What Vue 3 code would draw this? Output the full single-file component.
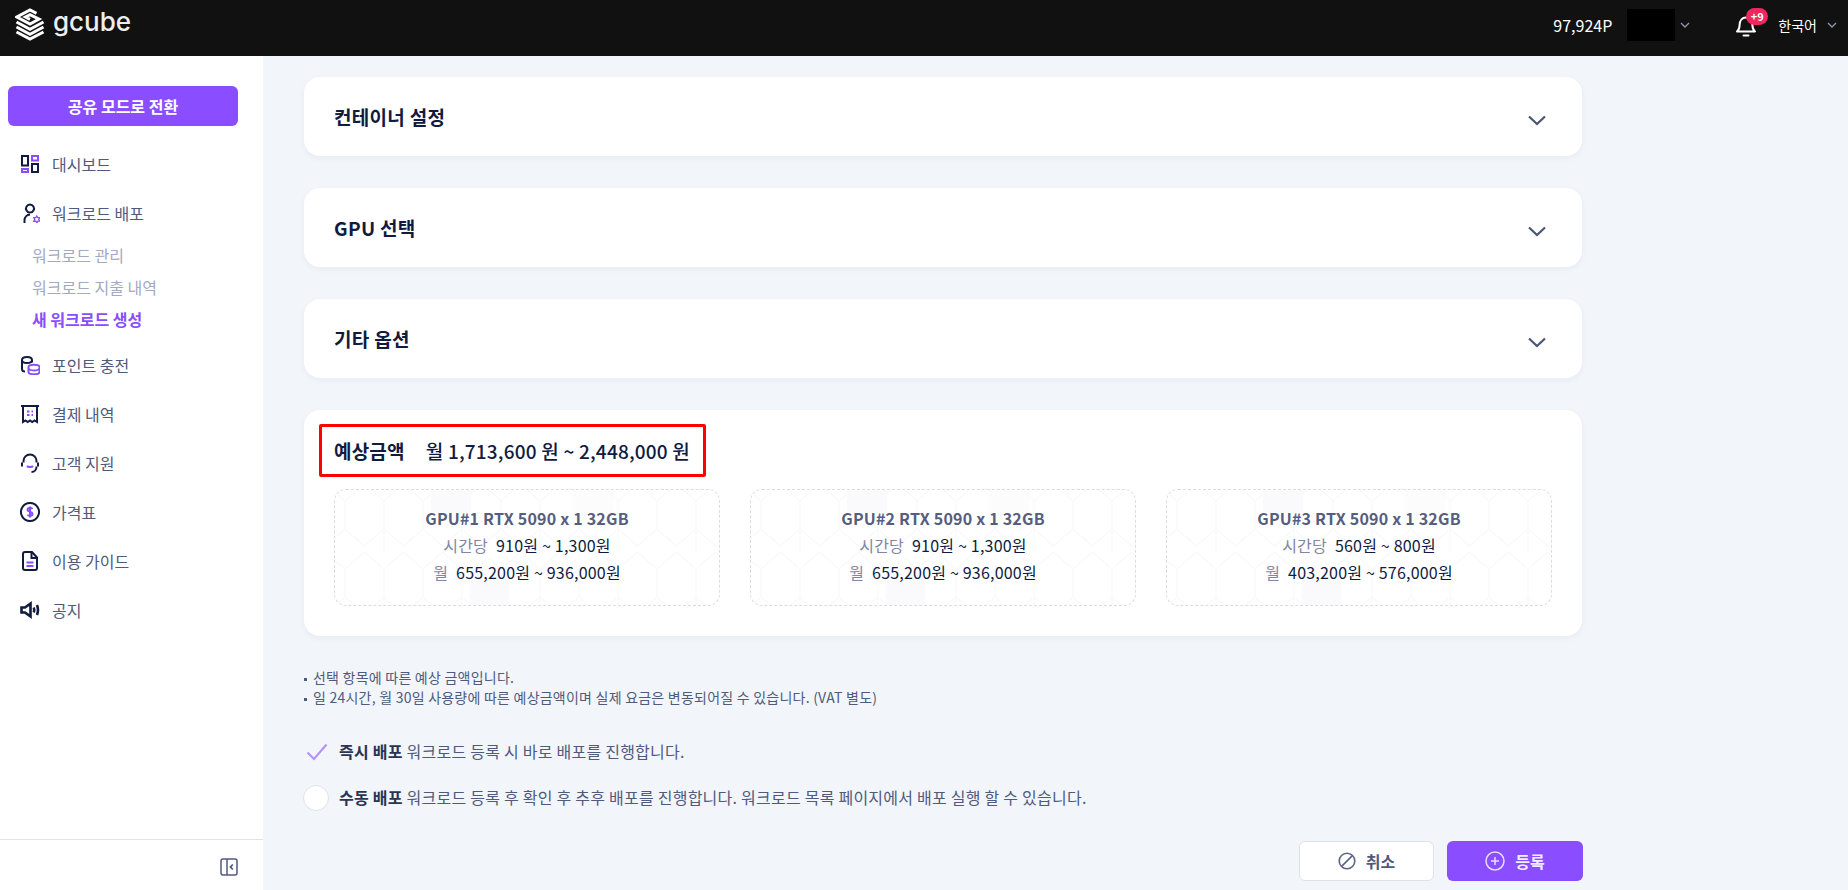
<template>
  <div class="page">
    <header class="topbar">
      <div class="logo">
        <svg class="logo-mark" viewBox="0 0 30 32" fill="none" stroke="#fff" stroke-width="3">
          <path d="M21.500 4.800 15 1.500 2 8.500 15 15.500 24 10.600 15 6.200 10.500 8.500 15 10.800" />
          <path d="M1.500 13.500 15 20.800 28.500 13.500" />
          <path d="M1.500 18.500 15 25.800 28.500 18.500" />
          <path d="M1.500 23.500 15 30.600 28.500 23.500" />
        </svg>
        <span class="logo-text">gcube</span>
      </div>
      <div class="topbar-right">
        <span class="points">97,924P</span>
        <span class="user-mask"></span>
        <svg class="caret user-caret" viewBox="0 0 10 6"><path d="M1 1l4 4 4-4" /></svg>
        <div class="bell">
          <svg viewBox="0 0 22 24" fill="none" stroke="#fff" stroke-width="2">
            <path d="M2 18.500c2-1.600 2.600-3.400 2.600-6.500 0-4.400 2.600-7.500 6.400-7.500s6.400 3.100 6.400 7.500c0 3.100.6 4.900 2.600 6.500z" stroke-linejoin="round" />
            <path d="M8.500 22.500h5" stroke-linecap="round" />
          </svg>
          <span class="badge">+9</span>
        </div>
        <span class="lang">한국어</span>
        <svg class="caret" viewBox="0 0 10 6"><path d="M1 1l4 4 4-4" /></svg>
      </div>
    </header>

    <div class="body">
      <aside class="sidebar">
        <button class="mode-btn">공유 모드로 전환</button>
        <nav class="nav">
          <template v-for="item in navItems" :key="item.label">
            <div class="nav-item">
              <svg class="nav-icon" viewBox="0 0 20 20" fill="none" :stroke-width="item.weight || 2">
                <path v-for="d in item.navy" :key="d" :d="d" stroke="#101b3f" />
                <path v-for="d in item.purple" :key="d" :d="d" stroke="#8a4dff" />
                <path v-if="item.gear" :d="item.gear" stroke="#8a4dff" stroke-width="1.300" />
              </svg>
              <span>{{ item.label }}</span>
            </div>
            <div v-if="item.children" class="sub-list">
              <div
                v-for="child in item.children"
                :key="child.label"
                class="sub-item"
                :class="{ active: child.active }"
              >{{ child.label }}</div>
            </div>
          </template>
        </nav>
        <div class="sidebar-foot">
          <svg viewBox="0 0 18 18" fill="none" stroke="#4f5a7c" stroke-width="1.500">
            <rect x="1" y="1" width="16" height="16" rx="2" />
            <path d="M7 1v16" />
            <path d="M12.800 6.500 10.500 9l2.300 2.500" stroke-width="1.800" />
          </svg>
        </div>
      </aside>

      <main class="main">
        <section v-for="title in sections" :key="title" class="card accordion">
          <h2>{{ title }}</h2>
          <svg class="accordion-caret" viewBox="0 0 18 11" fill="none"><path d="M1 1.500l8 7.500 8-7.500" /></svg>
        </section>

        <section class="card estimate">
          <div class="estimate-row">
            <strong>예상금액</strong>
            <span>월 1,713,600 원 ~ 2,448,000 원</span>
          </div>
          <div class="gpu-grid">
            <div v-for="gpu in gpus" :key="gpu.name" class="gpu-box">
              <svg class="hex-bg" width="100%" height="100%">
                <defs>
                  <pattern :id="'hex-' + gpu.id" width="78" height="68" patternUnits="userSpaceOnUse" x="10" y="-6">
                    <path d="M0 17 19.500 0 39 17V45L19.500 62M39 17 58.500 0 78 17V45L58.500 62 39 45 19.500 62 0 45V17M39 45V68" fill="none" stroke="#fafafc" stroke-width="1.500" />
                  </pattern>
                </defs>
                <rect width="100%" height="100%" :fill="'url(#hex-' + gpu.id + ')'" />
                <rect x="35%" y="90" width="40" height="27" fill="#fafafc" />
                <rect x="62%" y="0" width="40" height="36" fill="#fcfcfd" />
                <rect x="25%" y="0" width="40" height="22" fill="#fafafc" />
              </svg>
              <p class="gpu-name">{{ gpu.name }}</p>
              <p class="gpu-line"><span>시간당</span>{{ gpu.hourly }}</p>
              <p class="gpu-line"><span>월</span>{{ gpu.monthly }}</p>
            </div>
          </div>
        </section>

        <ul class="notes">
          <li>선택 항목에 따른 예상 금액입니다.</li>
          <li>일 24시간, 월 30일 사용량에 따른 예상금액이며 실제 요금은 변동되어질 수 있습니다. (VAT 별도)</li>
        </ul>

        <div class="option">
          <span class="option-mark">
            <svg viewBox="0 0 22 18" fill="none" stroke="#b68fff" stroke-width="2"><path d="M1.500 9.500 8 16 20.500 1.500" /></svg>
          </span>
          <p><b>즉시 배포</b> 워크로드 등록 시 바로 배포를 진행합니다.</p>
        </div>
        <div class="option">
          <span class="option-mark"><i class="radio"></i></span>
          <p><b>수동 배포</b> 워크로드 등록 후 확인 후 추후 배포를 진행합니다. 워크로드 목록 페이지에서 배포 실행 할 수 있습니다.</p>
        </div>

        <div class="actions">
          <button class="btn btn-cancel">
            <svg viewBox="0 0 18 18" fill="none" stroke="#5b6482" stroke-width="1.600">
              <circle cx="9" cy="9" r="7.800" />
              <path d="M3.600 14.400 14.400 3.600" />
            </svg>
            취소
          </button>
          <button class="btn btn-submit">
            <svg viewBox="0 0 20 20" fill="none" stroke="#e6dcff" stroke-width="1.500">
              <circle cx="10" cy="10" r="9" />
              <path d="M10 6v8M6 10h8" />
            </svg>
            등록
          </button>
        </div>
      </main>
    </div>
  </div>
</template>

<script setup>
const navItems = [
  {
    label: '대시보드',
    navy: ['M2 2h6v9.500H2z', 'M12 10h6v8h-6z'],
    purple: ['M2 15h6v3H2z', 'M12 2h6v4.500h-6z'],
  },
  {
    label: '워크로드 배포',
    navy: ['M10 1.500a4 4 0 1 1-.01 0z', 'M4.500 20v-3a6 6 0 0 1 5.500-5.500'],
    purple: [],
    gear: 'M16.800 13l1 1.700 2-.1-1 1.800 1 1.800-2-.1-1 1.700-1-1.700-2 .1 1-1.800-1-1.800 2 .1z',
  },
  {
    label: '포인트 충전',
    navy: ['M2 5c0-4 10-4 10 0s-10 4-10 0z', 'M2 5v9c0 1.500 1 2.500 3 2.500', 'M12 5v2.500'],
    purple: ['M8.500 12c0-3 11-3 11 0v5c0 3-11 3-11 0z', 'M8.500 13.500c1 2.500 10 2.500 11 0'],
  },
  {
    label: '결제 내역',
    navy: ['M1 2h18', 'M3 2v16l2.500-1.500 2.300 1.500 2.200-1.500 2.200 1.500 2.300-1.500L17 18V2'],
    purple: ['M7 7.500h2.500M11.500 7.500H13M7 11h2.500M11.500 11H13'],
  },
  {
    label: '고객 지원',
    navy: ['M3.500 9.500V8a6.500 6.500 0 0 1 13 0v1.500', 'M2 9.500v4M18 9.500v4', 'M16.500 13.500c0 3-2 5.500-5 5.500'],
    purple: ['M7 13c1 1.200 5 1.200 6 0'],
  },
  {
    label: '가격표',
    navy: ['M10 1a9 9 0 1 1-.01 0z'],
    purple: ['M12.500 7c-1-1.500-5-1.500-5 .8 0 2.400 5 1.600 5 4.200 0 2.300-4 2.300-5 .8', 'M10 4.500v11'],
  },
  {
    label: '이용 가이드',
    navy: ['M3 3a2 2 0 0 1 2-2h7l5 5.500V17a2 2 0 0 1-2 2H5a2 2 0 0 1-2-2z', 'M11.500 1v6h5.500'],
    purple: ['M6.500 11.500h7M6.500 15h7'],
  },
  {
    label: '공지',
    weight: 2.600,
    navy: ['M1.500 7.500v5H5L10.500 16.500V3.500L5 7.500z', 'M13.800 7.500c.6 1.600.6 3.400 0 5', 'M17 5c1.300 3.300 1.300 6.700 0 10'],
    purple: [],
  },
]
navItems[1].children = [
  { label: '워크로드 관리' },
  { label: '워크로드 지출 내역' },
  { label: '새 워크로드 생성', active: true },
]

const sections = ['컨테이너 설정', 'GPU 선택', '기타 옵션']

const gpus = [
  { id: 1, name: 'GPU#1 RTX 5090 x 1 32GB', hourly: '910원 ~ 1,300원', monthly: '655,200원 ~ 936,000원' },
  { id: 2, name: 'GPU#2 RTX 5090 x 1 32GB', hourly: '910원 ~ 1,300원', monthly: '655,200원 ~ 936,000원' },
  { id: 3, name: 'GPU#3 RTX 5090 x 1 32GB', hourly: '560원 ~ 800원', monthly: '403,200원 ~ 576,000원' },
]
</script>

<style>
html,
body {
  margin: 0;
  height: 100%;
  overflow: hidden;
}
</style>

<style scoped>
.page {
  height: 100vh;
  display: flex;
  flex-direction: column;
  font-family: "Noto Sans CJK KR", "Noto Sans", sans-serif;
  color: #101b3f;
  background: #f2f5fa;
}

.topbar {
  height: 56px;
  flex: none;
  background: #111;
  display: flex;
  align-items: center;
  justify-content: space-between;
  padding-bottom: 7px;
  box-sizing: border-box;
  color: #fff;
}

.logo {
  display: flex;
  align-items: center;
  margin-left: 15px;
}

.logo-mark {
  width: 30px;
  height: 33px;
}

.logo-text {
  margin-left: 8px;
  margin-top: -6px;
  font-family: Inter, sans-serif;
  font-size: 26px;
  font-weight: 500;
  line-height: 1;
  color: #eee;
}

.topbar-right {
  display: flex;
  align-items: center;
  margin-right: 11px;
}

.points {
  font-size: 16px;
  width: 74px;
}

.user-mask {
  width: 48px;
  height: 32px;
  background: #000;
}

.caret {
  width: 10px;
  height: 6px;
  fill: none;
  stroke: #8d97b3;
  stroke-width: 1.300;
}

.user-caret {
  margin-left: 5px;
}

.bell {
  position: relative;
  width: 22px;
  height: 24px;
  margin-left: 45px;
}

.bell svg {
  width: 22px;
  height: 24px;
}

.badge {
  position: absolute;
  left: 11px;
  top: -5px;
  width: 22px;
  height: 17px;
  border-radius: 9px;
  background: #f0265e;
  font-size: 11px;
  font-weight: 700;
  line-height: 17px;
  text-align: center;
}

.lang {
  margin-left: 21px;
  margin-right: 10px;
  font-size: 14px;
}

.body {
  flex: 1;
  display: flex;
  min-height: 0;
}

.sidebar {
  width: 263px;
  flex: none;
  background: #fff;
  display: flex;
  flex-direction: column;
  padding-top: 30px;
  box-sizing: border-box;
}

.mode-btn {
  width: 230px;
  height: 40px;
  margin: 0 0 13px 8px;
  border: none;
  border-radius: 6px;
  background: #8a4dff;
  color: #fff;
  font: 700 16px "Noto Sans CJK KR", sans-serif;
}

.nav {
  flex: 1;
}

.nav-item {
  height: 49px;
  display: flex;
  align-items: center;
  padding-left: 20px;
  font-size: 16px;
  color: #4f5a7c;
}

.nav-icon {
  width: 20px;
  height: 20px;
  margin-right: 12px;
}

.sub-list {
  margin: 2px 0 5px 32px;
}

.sub-item {
  height: 32px;
  line-height: 32px;
  font-size: 16px;
  color: #a3a9bf;
}

.sub-item.active {
  color: #8a4dff;
  font-weight: 700;
}

.sidebar-foot {
  height: 51px;
  flex: none;
  border-top: 1px solid #e1e3ec;
  box-sizing: border-box;
  display: flex;
  align-items: center;
  justify-content: flex-end;
  padding: 4px 25px 0 0;
}

.sidebar-foot svg {
  width: 18px;
  height: 18px;
}

.main {
  flex: 1;
  min-width: 0;
  padding: 21px 0 0 41px;
  box-sizing: border-box;
}

.card {
  width: 1278px;
  background: #fff;
  border-radius: 16px;
  box-shadow: 0 2px 6px rgba(30, 50, 110, 0.05);
  box-sizing: border-box;
}

.accordion {
  height: 79px;
  margin-bottom: 32px;
  padding: 0 36px 0 30px;
  display: flex;
  align-items: center;
  justify-content: space-between;
}

.accordion h2 {
  margin: 0;
  font-size: 19px;
  font-weight: 700;
  letter-spacing: 0.3px;
}

.accordion-caret {
  width: 18px;
  height: 11px;
  margin-top: 7px;
  stroke: #4a5478;
  stroke-width: 2.200;
}

.estimate {
  height: 226px;
  padding: 14px 30px 0 15px;
}

.estimate-row {
  width: fit-content;
  height: 53px;
  box-sizing: border-box;
  border: 3px solid #f00;
  border-radius: 2px;
  padding: 0 13px 0 12px;
  display: flex;
  align-items: center;
  gap: 21px;
  font-size: 19px;
  font-weight: 500;
  letter-spacing: 0.2px;
}

.estimate-row strong {
  font-weight: 700;
}

.gpu-grid {
  display: grid;
  grid-template-columns: repeat(3, 386px);
  gap: 30px;
  margin: 12px 0 0 15px;
}

.gpu-box {
  position: relative;
  height: 117px;
  box-sizing: border-box;
  border: 1px dashed #d9dbe8;
  border-radius: 12px;
  overflow: hidden;
  padding-top: 15px;
  text-align: center;
  letter-spacing: 0.2px;
}

.hex-bg {
  position: absolute;
  inset: 0;
}

.gpu-box p {
  position: relative;
  margin: 0;
  line-height: 27px;
}

.gpu-name {
  font-size: 16px;
  font-weight: 700;
  color: #555e7f;
}

.gpu-line {
  font-size: 16px;
  font-weight: 400;
}

.gpu-line span {
  margin-right: 8px;
  color: #7f87a3;
}

.notes {
  list-style: none;
  margin: 31px 0 22px;
  padding: 0;
  font-size: 14px;
  letter-spacing: 0.23px;
  line-height: 20px;
  color: #4f5a7c;
}

.notes li {
  position: relative;
  padding-left: 9px;
}

.notes li::before {
  content: "";
  position: absolute;
  left: 0;
  top: 11px;
  width: 3px;
  height: 3px;
  background: #4f5a7c;
}

.option {
  height: 46px;
  display: flex;
  align-items: center;
  font-size: 16px;
  letter-spacing: 0.24px;
  color: #4f5a7c;
}

.option p {
  margin: 0 0 2px;
}

.option b {
  font-weight: 700;
  color: #2a3454;
}

.option-mark {
  width: 35px;
  display: flex;
  padding-left: 2px;
  box-sizing: border-box;
}

.option-mark svg {
  width: 22px;
  height: 18px;
}

.radio {
  width: 26px;
  height: 26px;
  margin-left: -3px;
  border: 1px solid #dfe2ec;
  border-radius: 50%;
  background: #fff;
  box-sizing: border-box;
}

.actions {
  width: 1279px;
  margin-top: 20px;
  display: flex;
  justify-content: flex-end;
  gap: 13px;
}

.btn {
  width: 135px;
  height: 40px;
  border-radius: 6px;
  display: flex;
  align-items: center;
  justify-content: center;
  gap: 10px;
  font: 700 16px "Noto Sans CJK KR", sans-serif;
  box-sizing: border-box;
}

.btn svg {
  width: 18px;
  height: 18px;
}

.btn-cancel {
  border: 1px solid #dfe2ec;
  background: #fff;
  color: #4f5a7c;
}

.btn-submit {
  width: 136px;
  border: none;
  background: #8a4dff;
  color: #f2ecff;
}

.btn-submit svg {
  width: 20px;
  height: 20px;
}
</style>
